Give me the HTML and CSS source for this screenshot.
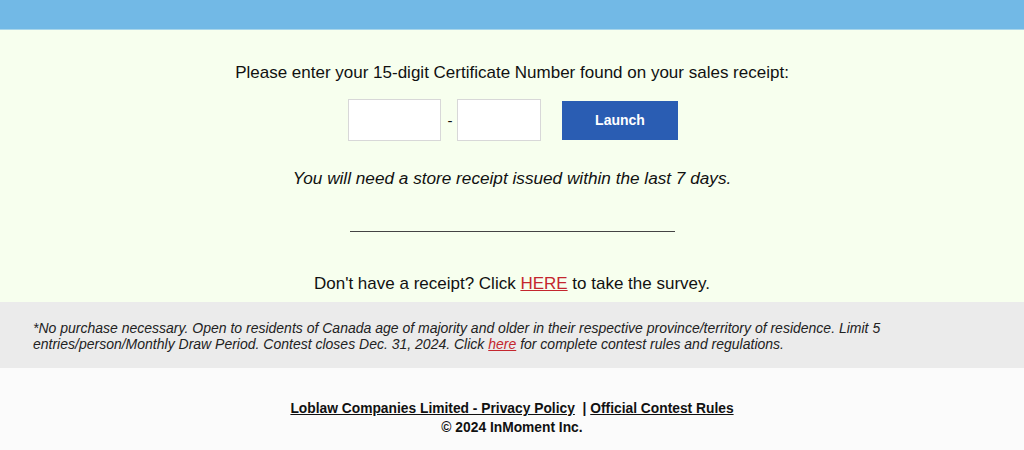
FILE: index.html
```html
<!DOCTYPE html>
<html>
<head>
<meta charset="utf-8">
<link rel="stylesheet" href="styles.css">
</head>
<body>
<div class="topbar"></div>
<main class="main">
  <p class="prompt">Please enter your 15-digit Certificate Number found on your sales receipt:</p>
  <div class="form-row">
    <input class="cn" type="text">
    <span class="dash">-</span>
    <input class="cn cn2" type="text">
    <button class="launch">Launch</button>
  </div>
  <p class="note">You will need a store receipt issued within the last 7 days.</p>
  <div class="rule"></div>
  <p class="survey">Don't have a receipt? Click <a href="#" class="red">HERE</a> to take the survey.</p>
</main>
<section class="disclaimer">
  <p>*No purchase necessary. Open to residents of Canada age of majority and older in their respective province/territory of residence. Limit 5<br>entries/person/Monthly Draw Period. Contest closes Dec. 31, 2024. Click <a href="#" class="red">here</a> for complete contest rules and regulations.</p>
</section>
<footer class="footer">
  <div class="links"><a href="#">Loblaw Companies Limited - Privacy Policy</a>&nbsp; | <a href="#">Official Contest Rules</a></div>
  <div class="copy">© 2024 InMoment Inc.</div>
</footer>
</body>
</html>
```
FILE: styles.css
```css
html, body { margin: 0; padding: 0; }
body {
  font-family: "Liberation Sans", Arial, sans-serif;
  color: #111;
  background: #fbfbfb;
  width: 1024px;
}
.topbar { height: 29px; background: #72b9e6; border-bottom: 1px solid #a9d6ea; }
.main {
  background: #f7ffee;
  display: flex;
  flex-direction: column;
  align-items: center;
  padding-top: 32px;
  height: 240px;
}
.prompt { margin: 0; font-size: 17px; line-height: 22px; }
.form-row {
  display: flex;
  align-items: center;
  margin-top: 15px;
  margin-left: 2px;
}
.cn {
  width: 93px;
  height: 42px;
  box-sizing: border-box;
  border: 1px solid #d8d8d8;
  background: #fff;
  margin: 0;
  padding: 0;
}
.cn2 { width: 84px; }
.dash { width: 16px; text-align: center; font-size: 15px; padding-left: 2px; box-sizing: border-box; }
.launch {
  margin-left: 21px;
  width: 116px;
  height: 39px;
  background: #2a5db3;
  color: #fff;
  border: none;
  font-family: "Liberation Sans", Arial, sans-serif;
  font-weight: bold;
  font-size: 14px;
  padding: 0;
}
.note { margin: 26px 0 0; font-size: 17.2px; font-style: italic; line-height: 22px; }
.rule { width: 325px; border-bottom: 1px solid #444; margin-top: 32px; height: 10px; }
.survey { margin: 41px 0 0; font-size: 17px; line-height: 22px; }
.red { color: #c4262e; }
.disclaimer {
  background: #ebebeb;
  height: 66px;
  box-sizing: border-box;
  padding: 18px 33px 0;
}
.disclaimer p {
  margin: 0;
  font-family: "Liberation Sans", Arial, sans-serif;
  font-style: italic;
  font-size: 14px;
  line-height: 16px;
  color: #222;
}
.footer {
  padding-top: 31px;
  text-align: center;
  font-weight: bold;
  font-size: 13.8px;
  line-height: 19px;
}
.footer a { color: #111; }
.copy { margin-top: 0; }
```
